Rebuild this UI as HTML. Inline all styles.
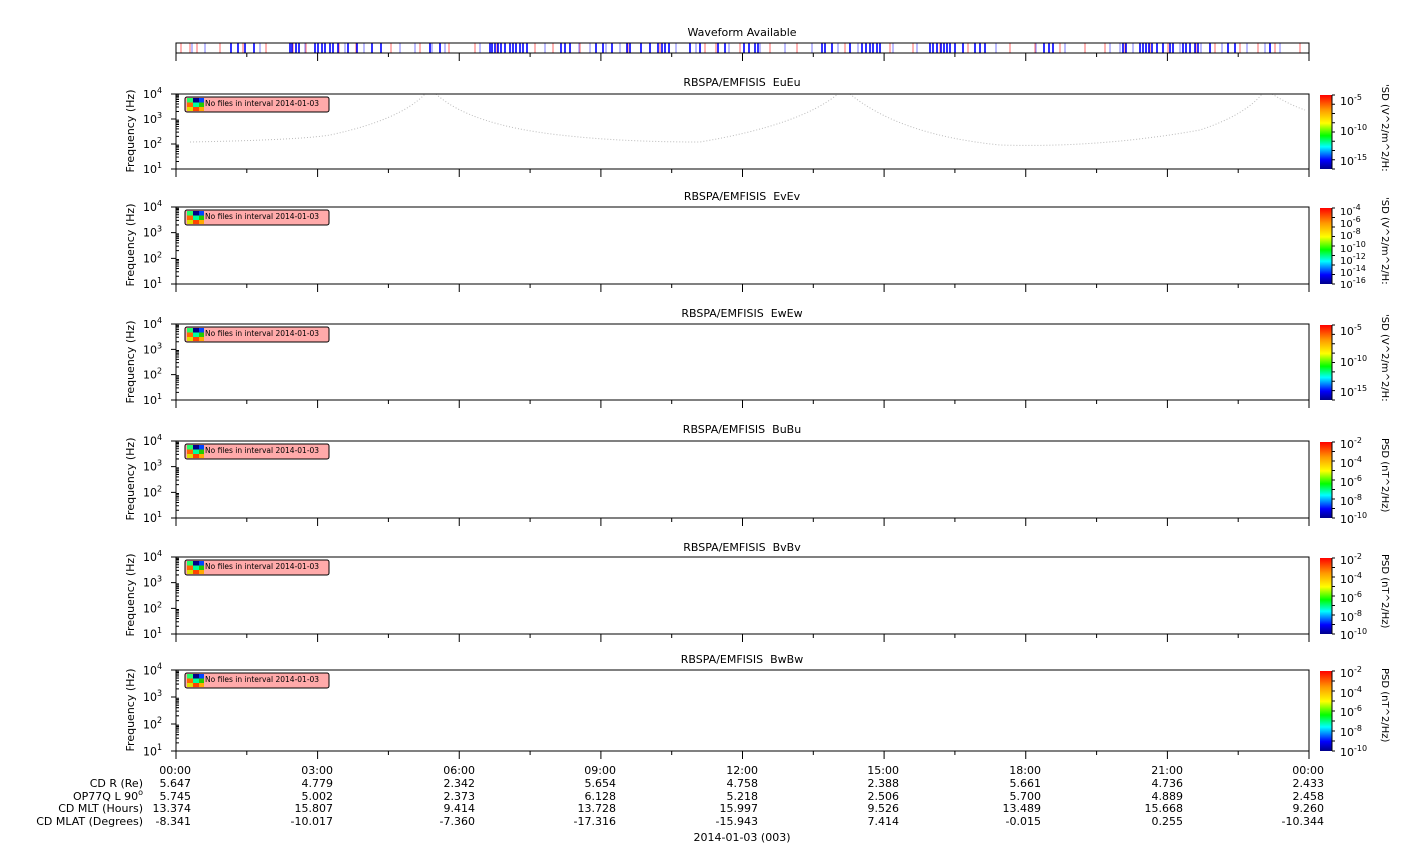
<!DOCTYPE html>
<html><head><meta charset="utf-8"><style>
html,body{margin:0;padding:0;background:#fff;width:1408px;height:859px;overflow:hidden}
svg{display:block;font-family:"DejaVu Sans","Liberation Sans",sans-serif}
</style></head><body>
<svg width="1408" height="859" viewBox="0 0 1408 859" xmlns="http://www.w3.org/2000/svg">
<defs>
<linearGradient id="cb" x1="0" y1="1" x2="0" y2="0">
<stop offset="0" stop-color="#00008a"/><stop offset="0.12" stop-color="#0000ff"/><stop offset="0.3" stop-color="#00ffff"/><stop offset="0.45" stop-color="#00ff00"/><stop offset="0.62" stop-color="#ffff00"/><stop offset="0.8" stop-color="#ff9900"/><stop offset="1" stop-color="#ff0000"/>
</linearGradient>
<g id="nf">
<rect x="0" y="0" width="144" height="15" rx="2" fill="#ffaaaa" stroke="#000" stroke-width="1"/>
<rect x="2" y="1" width="6" height="4.5" fill="#22ff66"/><rect x="8" y="1" width="6" height="4.5" fill="#000088"/><rect x="14" y="1" width="5" height="4.5" fill="#0044ff"/>
<rect x="2" y="5.5" width="6" height="4.5" fill="#ff6600"/><rect x="8" y="5.5" width="6" height="4.5" fill="#00ff99"/><rect x="14" y="5.5" width="5" height="4.5" fill="#22cc00"/>
<rect x="2" y="10" width="6" height="4" fill="#dddd00"/><rect x="8" y="10" width="6" height="4" fill="#ff4400"/><rect x="14" y="10" width="5" height="4" fill="#ffaa00"/>
<text x="20" y="9" font-size="7.5" fill="#000">No files in interval 2014-01-03</text>
</g>
<path id="tk" fill="none" stroke="#000" d="M176 0v8M246.8 0v4M317.6 0v8M388.4 0v4M459.25 0v8M530.1 0v4M600.9 0v8M671.7 0v4M742.5 0v8M813.3 0v4M884.1 0v8M954.9 0v4M1025.75 0v8M1096.6 0v4M1167.4 0v8M1238.2 0v4M1309 0v8"/>
<g id="ax">
<path fill="none" stroke="#000" d="M171 0h5M171 -25.33h5M171 -50.67h5M171 -76h5
M176 -7.6h3M176 -12.1h3M176 -15.3h3M176 -17.7h3M176 -19.7h3M176 -21.4h3M176 -22.9h3M176 -24.2h3
M176 -33h3M176 -37.4h3M176 -40.6h3M176 -43h3M176 -45.1h3M176 -46.7h3M176 -48.2h3M176 -49.5h3
M176 -58.3h3M176 -62.8h3M176 -65.9h3M176 -68.4h3M176 -70.4h3M176 -72.1h3M176 -73.6h3M176 -74.8h3"/>
<g font-size="11" fill="#000">
<text x="143" y="4">10<tspan font-size="8" dy="-5">1</tspan></text>
<text x="143" y="-21.3">10<tspan font-size="8" dy="-5">2</tspan></text>
<text x="143" y="-46.7">10<tspan font-size="8" dy="-5">3</tspan></text>
<text x="143" y="-72">10<tspan font-size="8" dy="-5">4</tspan></text>
</g>
</g>
<path id="ct" fill="none" stroke="#000" d="M1332 0v76M1332 0h3M1332 9.5h3M1332 19h3M1332 28.5h3M1332 38h3M1332 47.5h3M1332 57h3M1332 66.5h3M1332 76h3"/>
</defs>

<path fill="none" stroke="#ff6666" stroke-width="1" d="M181 43v10M190 43v10M197 43v10M220 43v10M243 43v10M266 43v10M293 43v10M306 43v10M339 43v10M356 43v10M391 43v10M420 43v10M449 43v10M475 43v10M497 43v10M535 43v10M553 43v10M580 43v10M628 43v10M660 43v10M705 43v10M716 43v10M740 43v10M770 43v10M797 43v10M832 43v10M845 43v10M870 43v10M890 43v10M913 43v10M940 43v10M968 43v10M985 43v10M1010 43v10M1035 43v10M1060 43v10M1085 43v10M1105 43v10M1125 43v10M1150 43v10M1168 43v10M1196 43v10M1215 43v10M1240 43v10M1258 43v10M1275 43v10M1300 43v10"/>
<path fill="none" stroke="#7777ff" stroke-width="1" d="M192 43v10M205 43v10M260 43v10M305 43v10M345 43v10M364 43v10M400 43v10M415 43v10M432 43v10M445 43v10M480 43v10M505 43v10M545 43v10M579 43v10M590 43v10M606 43v10M620 43v10M676 43v10M696 43v10M729 43v10M760 43v10M785 43v10M812 43v10M838 43v10M858 43v10M893 43v10M917 43v10M996 43v10M1036 43v10M1065 43v10M1110 43v10M1120 43v10M1133 43v10M1180 43v10M1201 43v10M1222 43v10M1247 43v10M1265 43v10M1280 43v10"/>
<path fill="none" stroke="#0000ff" stroke-width="1.6" d="M231 43v10M238 43v10M245 43v10M254 43v10M290 43v10M292 43v10M296 43v10M299 43v10M315 43v10M318 43v10M322 43v10M325 43v10M330 43v10M333 43v10M338 43v10M348 43v10M357 43v10M372 43v10M381 43v10M430 43v10M440 43v10M490 43v10M492 43v10M495 43v10M498 43v10M501 43v10M505 43v10M510 43v10M513 43v10M516 43v10M520 43v10M523 43v10M527 43v10M561 43v10M565 43v10M570 43v10M596 43v10M603 43v10M612 43v10M627 43v10M630 43v10M641 43v10M650 43v10M658 43v10M662 43v10M665 43v10M669 43v10M690 43v10M700 43v10M718 43v10M725 43v10M744 43v10M749 43v10M755 43v10M758 43v10M822 43v10M825 43v10M832 43v10M850 43v10M862 43v10M866 43v10M870 43v10M873 43v10M877 43v10M880 43v10M930 43v10M933 43v10M937 43v10M941 43v10M944 43v10M947 43v10M950 43v10M955 43v10M963 43v10M975 43v10M980 43v10M985 43v10M1044 43v10M1049 43v10M1053 43v10M1123 43v10M1126 43v10M1140 43v10M1143 43v10M1146 43v10M1149 43v10M1152 43v10M1157 43v10M1163 43v10M1170 43v10M1173 43v10M1183 43v10M1186 43v10M1190 43v10M1195 43v10M1198 43v10M1210 43v10M1228 43v10M1235 43v10M1270 43v10"/>
<rect x="176" y="43" width="1133" height="10" fill="none" stroke="#000"/>
<path fill="none" stroke="#000" d="M176 53v8M246.8 53v4M317.6 53v8M388.4 53v4M459.25 53v8M530.1 53v4M600.9 53v8M671.7 53v4M742.5 53v8M813.3 53v4M884.1 53v8M954.9 53v4M1025.75 53v8M1096.6 53v4M1167.4 53v8M1238.2 53v4M1309 53v8"/>

<g fill="none" stroke="#bbb" stroke-width="1" stroke-dasharray="1,2">
<path d="M190,142 Q300,140 330,135 Q400,120 425,94"/>
<path d="M436,94 Q470,125 560,135 Q620,142 700,142 Q800,125 838,94"/>
<path d="M850,94 Q900,135 1000,145 Q1100,148 1200,130 Q1245,115 1262,94"/>
<path d="M1272,94 Q1290,105 1305,110"/>
</g>

<g fill="none" stroke="#000">
<rect x="176" y="94" width="1133" height="75"/>
<rect x="176" y="207" width="1133" height="77"/>
<rect x="176" y="324" width="1133" height="76"/>
<rect x="176" y="441" width="1133" height="77"/>
<rect x="176" y="557" width="1133" height="77"/>
<rect x="176" y="670" width="1133" height="81"/>
</g>
<use href="#tk" x="0" y="169"/><use href="#tk" x="0" y="284"/><use href="#tk" x="0" y="400"/><use href="#tk" x="0" y="518"/><use href="#tk" x="0" y="634"/><use href="#tk" x="0" y="751"/>
<use href="#ax" transform="translate(0,169) scale(1,0.987)"/>
<use href="#ax" transform="translate(0,284) scale(1,1.013)"/>
<use href="#ax" transform="translate(0,400)"/>
<use href="#ax" transform="translate(0,518) scale(1,1.013)"/>
<use href="#ax" transform="translate(0,634) scale(1,1.013)"/>
<use href="#ax" transform="translate(0,751) scale(1,1.066)"/>

<rect x="1320" y="95" width="12" height="74" fill="url(#cb)"/>
<rect x="1320" y="208" width="12" height="76" fill="url(#cb)"/>
<rect x="1320" y="325" width="12" height="75" fill="url(#cb)"/>
<rect x="1320" y="442" width="12" height="76" fill="url(#cb)"/>
<rect x="1320" y="558" width="12" height="76" fill="url(#cb)"/>
<rect x="1320" y="671" width="12" height="80" fill="url(#cb)"/>
<use href="#ct" transform="translate(0,95) scale(1,0.974)"/>
<use href="#ct" transform="translate(0,208)"/>
<use href="#ct" transform="translate(0,325) scale(1,0.987)"/>
<use href="#ct" transform="translate(0,442)"/>
<use href="#ct" transform="translate(0,558)"/>
<use href="#ct" transform="translate(0,671) scale(1,1.053)"/>

<g font-size="11" fill="#000" text-anchor="middle">
<text x="742" y="36">Waveform Available</text>
<text x="742" y="86">RBSPA/EMFISIS&#160; EuEu</text>
<text x="742" y="200">RBSPA/EMFISIS&#160; EvEv</text>
<text x="742" y="317">RBSPA/EMFISIS&#160; EwEw</text>
<text x="742" y="433">RBSPA/EMFISIS&#160; BuBu</text>
<text x="742" y="551">RBSPA/EMFISIS&#160; BvBv</text>
<text x="742" y="663">RBSPA/EMFISIS&#160; BwBw</text>
</g>
<g font-size="11" fill="#000">
<text transform="translate(134,131) rotate(-90)" text-anchor="middle">Frequency (Hz)</text>
<text transform="translate(134,245) rotate(-90)" text-anchor="middle">Frequency (Hz)</text>
<text transform="translate(134,362) rotate(-90)" text-anchor="middle">Frequency (Hz)</text>
<text transform="translate(134,479) rotate(-90)" text-anchor="middle">Frequency (Hz)</text>
<text transform="translate(134,595) rotate(-90)" text-anchor="middle">Frequency (Hz)</text>
<text transform="translate(134,710) rotate(-90)" text-anchor="middle">Frequency (Hz)</text>
</g>
<use href="#nf" x="185" y="97"/>
<use href="#nf" x="185" y="210"/>
<use href="#nf" x="185" y="327"/>
<use href="#nf" x="185" y="444"/>
<use href="#nf" x="185" y="560"/>
<use href="#nf" x="185" y="673"/>
<g font-size="11" fill="#000">
<text x="1340" y="105">10<tspan font-size="8" dy="-5">-5</tspan></text>
<text x="1340" y="135">10<tspan font-size="8" dy="-5">-10</tspan></text>
<text x="1340" y="165">10<tspan font-size="8" dy="-5">-15</tspan></text>
<g font-size="10">
<text x="1340" y="215">10<tspan font-size="8" dy="-5">-4</tspan></text>
<text x="1340" y="227">10<tspan font-size="8" dy="-5">-6</tspan></text>
<text x="1340" y="239">10<tspan font-size="8" dy="-5">-8</tspan></text>
<text x="1340" y="252">10<tspan font-size="8" dy="-5">-10</tspan></text>
<text x="1340" y="264">10<tspan font-size="8" dy="-5">-12</tspan></text>
<text x="1340" y="276">10<tspan font-size="8" dy="-5">-14</tspan></text>
<text x="1340" y="288">10<tspan font-size="8" dy="-5">-16</tspan></text>
</g>
<text x="1340" y="335">10<tspan font-size="8" dy="-5">-5</tspan></text>
<text x="1340" y="366">10<tspan font-size="8" dy="-5">-10</tspan></text>
<text x="1340" y="396">10<tspan font-size="8" dy="-5">-15</tspan></text>
<text x="1340" y="448">10<tspan font-size="8" dy="-5">-2</tspan></text>
<text x="1340" y="467">10<tspan font-size="8" dy="-5">-4</tspan></text>
<text x="1340" y="486">10<tspan font-size="8" dy="-5">-6</tspan></text>
<text x="1340" y="505">10<tspan font-size="8" dy="-5">-8</tspan></text>
<text x="1340" y="523">10<tspan font-size="8" dy="-5">-10</tspan></text>
<text x="1340" y="564">10<tspan font-size="8" dy="-5">-2</tspan></text>
<text x="1340" y="583">10<tspan font-size="8" dy="-5">-4</tspan></text>
<text x="1340" y="602">10<tspan font-size="8" dy="-5">-6</tspan></text>
<text x="1340" y="621">10<tspan font-size="8" dy="-5">-8</tspan></text>
<text x="1340" y="639">10<tspan font-size="8" dy="-5">-10</tspan></text>
<text x="1340" y="677">10<tspan font-size="8" dy="-5">-2</tspan></text>
<text x="1340" y="697">10<tspan font-size="8" dy="-5">-4</tspan></text>
<text x="1340" y="716">10<tspan font-size="8" dy="-5">-6</tspan></text>
<text x="1340" y="736">10<tspan font-size="8" dy="-5">-8</tspan></text>
<text x="1340" y="756">10<tspan font-size="8" dy="-5">-10</tspan></text>
</g>
<g font-size="10" fill="#000">
<text transform="translate(1382,84) rotate(90)">'SD (V^2/m^2/H:</text>
<text transform="translate(1382,197) rotate(90)">'SD (V^2/m^2/H:</text>
<text transform="translate(1382,314) rotate(90)">'SD (V^2/m^2/H:</text>
<text transform="translate(1382,438) rotate(90)">PSD (nT^2/Hz)</text>
<text transform="translate(1382,554) rotate(90)">PSD (nT^2/Hz)</text>
<text transform="translate(1382,668) rotate(90)">PSD (nT^2/Hz)</text>
</g>
<g font-size="11" fill="#000" text-anchor="end">
<text x="191" y="774">00:00</text><text x="333" y="774">03:00</text><text x="475" y="774">06:00</text><text x="616" y="774">09:00</text><text x="758" y="774">12:00</text><text x="899" y="774">15:00</text><text x="1041" y="774">18:00</text><text x="1183" y="774">21:00</text><text x="1324" y="774">00:00</text>
<text x="143" y="787">CD R (Re)</text>
<text x="191" y="787">5.647</text><text x="333" y="787">4.779</text><text x="475" y="787">2.342</text><text x="616" y="787">5.654</text><text x="758" y="787">4.758</text><text x="899" y="787">2.388</text><text x="1041" y="787">5.661</text><text x="1183" y="787">4.736</text><text x="1324" y="787">2.433</text>
<text x="143" y="800">OP77Q L 90<tspan font-size="8" dy="-5">o</tspan></text>
<text x="191" y="800">5.745</text><text x="333" y="800">5.002</text><text x="475" y="800">2.373</text><text x="616" y="800">6.128</text><text x="758" y="800">5.218</text><text x="899" y="800">2.506</text><text x="1041" y="800">5.700</text><text x="1183" y="800">4.889</text><text x="1324" y="800">2.458</text>
<text x="143" y="812">CD MLT (Hours)</text>
<text x="191" y="812">13.374</text><text x="333" y="812">15.807</text><text x="475" y="812">9.414</text><text x="616" y="812">13.728</text><text x="758" y="812">15.997</text><text x="899" y="812">9.526</text><text x="1041" y="812">13.489</text><text x="1183" y="812">15.668</text><text x="1324" y="812">9.260</text>
<text x="143" y="825">CD MLAT (Degrees)</text>
<text x="191" y="825">-8.341</text><text x="333" y="825">-10.017</text><text x="475" y="825">-7.360</text><text x="616" y="825">-17.316</text><text x="758" y="825">-15.943</text><text x="899" y="825">7.414</text><text x="1041" y="825">-0.015</text><text x="1183" y="825">0.255</text><text x="1324" y="825">-10.344</text>
</g>
<text x="742" y="841" font-size="11" text-anchor="middle" fill="#000">2014-01-03 (003)</text>
</svg>
</body></html>
